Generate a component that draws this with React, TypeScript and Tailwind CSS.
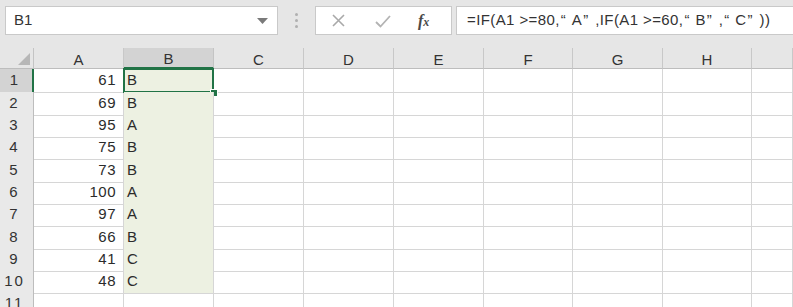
import React from "react";

const cols = ["A", "B", "C", "D", "E", "F", "G", "H", ""];
const rows: { h: string; a: string; b: string }[] = [
  { h: "h-[23px]", a: "61", b: "B" },
  { h: "h-[22px]", a: "69", b: "B" },
  { h: "h-[22px]", a: "95", b: "A" },
  { h: "h-[23px]", a: "75", b: "B" },
  { h: "h-[22px]", a: "73", b: "B" },
  { h: "h-[22px]", a: "100", b: "A" },
  { h: "h-[23px]", a: "97", b: "A" },
  { h: "h-[22px]", a: "66", b: "B" },
  { h: "h-[22px]", a: "41", b: "C" },
  { h: "h-[22px]", a: "48", b: "C" },
];

const gridCols =
  "grid grid-cols-[34px_90px_90px_90px_90px_90px_89px_90px_89px_1fr]";

const QO = () => (
  <span className="inline-block w-[12px] pl-[1px] text-left">“</span>
);
const QC = () => (
  <span className="inline-block w-[13px] pl-[1px] text-left">”</span>
);

export default function App() {
  return (
    <div className="w-[793px] h-[307px] overflow-hidden bg-white font-['Liberation_Sans',sans-serif] text-[#2b2b2b]">
      {/* Top bar */}
      <div className="h-[48px] bg-[#e6e6e6] flex items-start pt-[6px] pl-[5px]">
        <div className="w-[273px] h-[29px] bg-white border border-[#c9c9c9] flex items-center justify-between pl-[8px] pr-[9px]">
          <span className="text-[15px] text-[#333]">B1</span>
          <svg width="11" height="6" viewBox="0 0 11 6">
            <path d="M0 0 L11 0 L5.5 6 Z" fill="#7a7a7a" />
          </svg>
        </div>
        <div className="w-[37px] h-[29px] flex flex-col items-center justify-center gap-[3px]">
          <div className="w-[3px] h-[3px] rounded-full bg-[#b0b0b0]" />
          <div className="w-[3px] h-[3px] rounded-full bg-[#b0b0b0]" />
          <div className="w-[3px] h-[3px] rounded-full bg-[#b0b0b0]" />
        </div>
        <div className="w-[137px] h-[29px] bg-white border border-[#c9c9c9] flex items-center">
          <svg className="ml-[16px]" width="13" height="13" viewBox="0 0 13 13">
            <path d="M1 1 L12 12 M12 1 L1 12" stroke="#a9a9a9" strokeWidth="1.6" />
          </svg>
          <svg className="ml-[30px]" width="16" height="14" viewBox="0 0 16 14">
            <path d="M1 8 L5.5 12.5 L15 2" stroke="#b3b3b3" strokeWidth="1.8" fill="none" />
          </svg>
          <span className="ml-[27px] font-['Liberation_Serif',serif] italic font-bold text-[16px] text-[#4a4a4a] leading-none">
            f<span className="text-[12px]">x</span>
          </span>
        </div>
        <div className="ml-[4px] flex-1 h-[29px] bg-white border-y border-l border-[#c9c9c9] flex items-center pl-[10px] whitespace-nowrap">
          <span className="text-[15px] text-[#333] tracking-[0.4px]">
            =IF(A1 &gt;=80,<QO />A<QC />,IF(A1 &gt;=60,<QO />B<QC />,<QO />C<QC />))
          </span>
        </div>
      </div>

      {/* Column header */}
      <div className={`${gridCols} h-[21px] bg-[#e6e6e6] text-[15px] text-[#333]`}>
        <div className="relative border-r border-[#c4c4c4] border-b border-b-[#bdbdbd]">
          <svg className="absolute right-[3px] bottom-[3px]" width="12" height="12" viewBox="0 0 12 12">
            <path d="M12 0 L12 12 L0 12 Z" fill="#b7b7b7" />
          </svg>
        </div>
        {cols.map((c, i) =>
          c === "B" ? (
            <div
              key={i}
              className="bg-[#d3d3d3] border-r border-[#c4c4c4] border-b-2 border-b-[#217346] flex items-center justify-center leading-none pt-[2px]"
            >
              {c}
            </div>
          ) : (
            <div
              key={i}
              className="border-r border-[#c8c8c8] border-b border-b-[#bdbdbd] flex items-center justify-center leading-none pt-[3px]"
            >
              {c}
            </div>
          )
        )}
      </div>

      {/* Rows */}
      {rows.map((r, ri) => (
        <div key={ri} className={`${gridCols} ${r.h} text-[15px]`}>
          <div
            className={
              ri === 0
                ? "bg-[#d3d3d3] border-r-2 border-[#217346] border-b border-b-[#cfcfcf] flex items-center justify-center pr-[4px] text-[#333]"
                : "bg-[#e9e9e9] border-r border-[#bdbdbd] border-b border-b-[#cfcfcf] flex items-center justify-center pr-[4px] text-[#333] tracking-[2px]"
            }
          >
            {ri + 1}
          </div>
          <div className="border-r border-b border-[#d6d6d6] flex items-center justify-end pr-[7px] tracking-[0.5px]">
            {r.a}
          </div>
          <div className="relative bg-[#edf1e2] border-r border-b border-[#d6d6d6] flex items-center pl-[3px]">
            {r.b}
            {ri === 0 && (
              <div className="absolute top-[-1px] left-[-1px] right-[-1px] bottom-[-1px] border-2 border-[#217346]">
                <div className="absolute right-[-6px] bottom-[-6px] w-[8px] h-[8px] bg-[#217346] border border-white" />
              </div>
            )}
          </div>
          {[0, 1, 2, 3, 4, 5, 6].map((k) => (
            <div key={k} className="border-r border-b border-[#d6d6d6]" />
          ))}
        </div>
      ))}

      {/* Row 11 */}
      <div className={`${gridCols} h-[22px] text-[15px]`}>
        <div className="bg-[#e9e9e9] border-r border-[#bdbdbd] flex items-center justify-center pr-[4px] text-[#333] tracking-[2px]">
          11
        </div>
        {[0, 1, 2, 3, 4, 5, 6, 7, 8].map((k) => (
          <div key={k} className="border-r border-[#d6d6d6]" />
        ))}
      </div>
    </div>
  );
}
